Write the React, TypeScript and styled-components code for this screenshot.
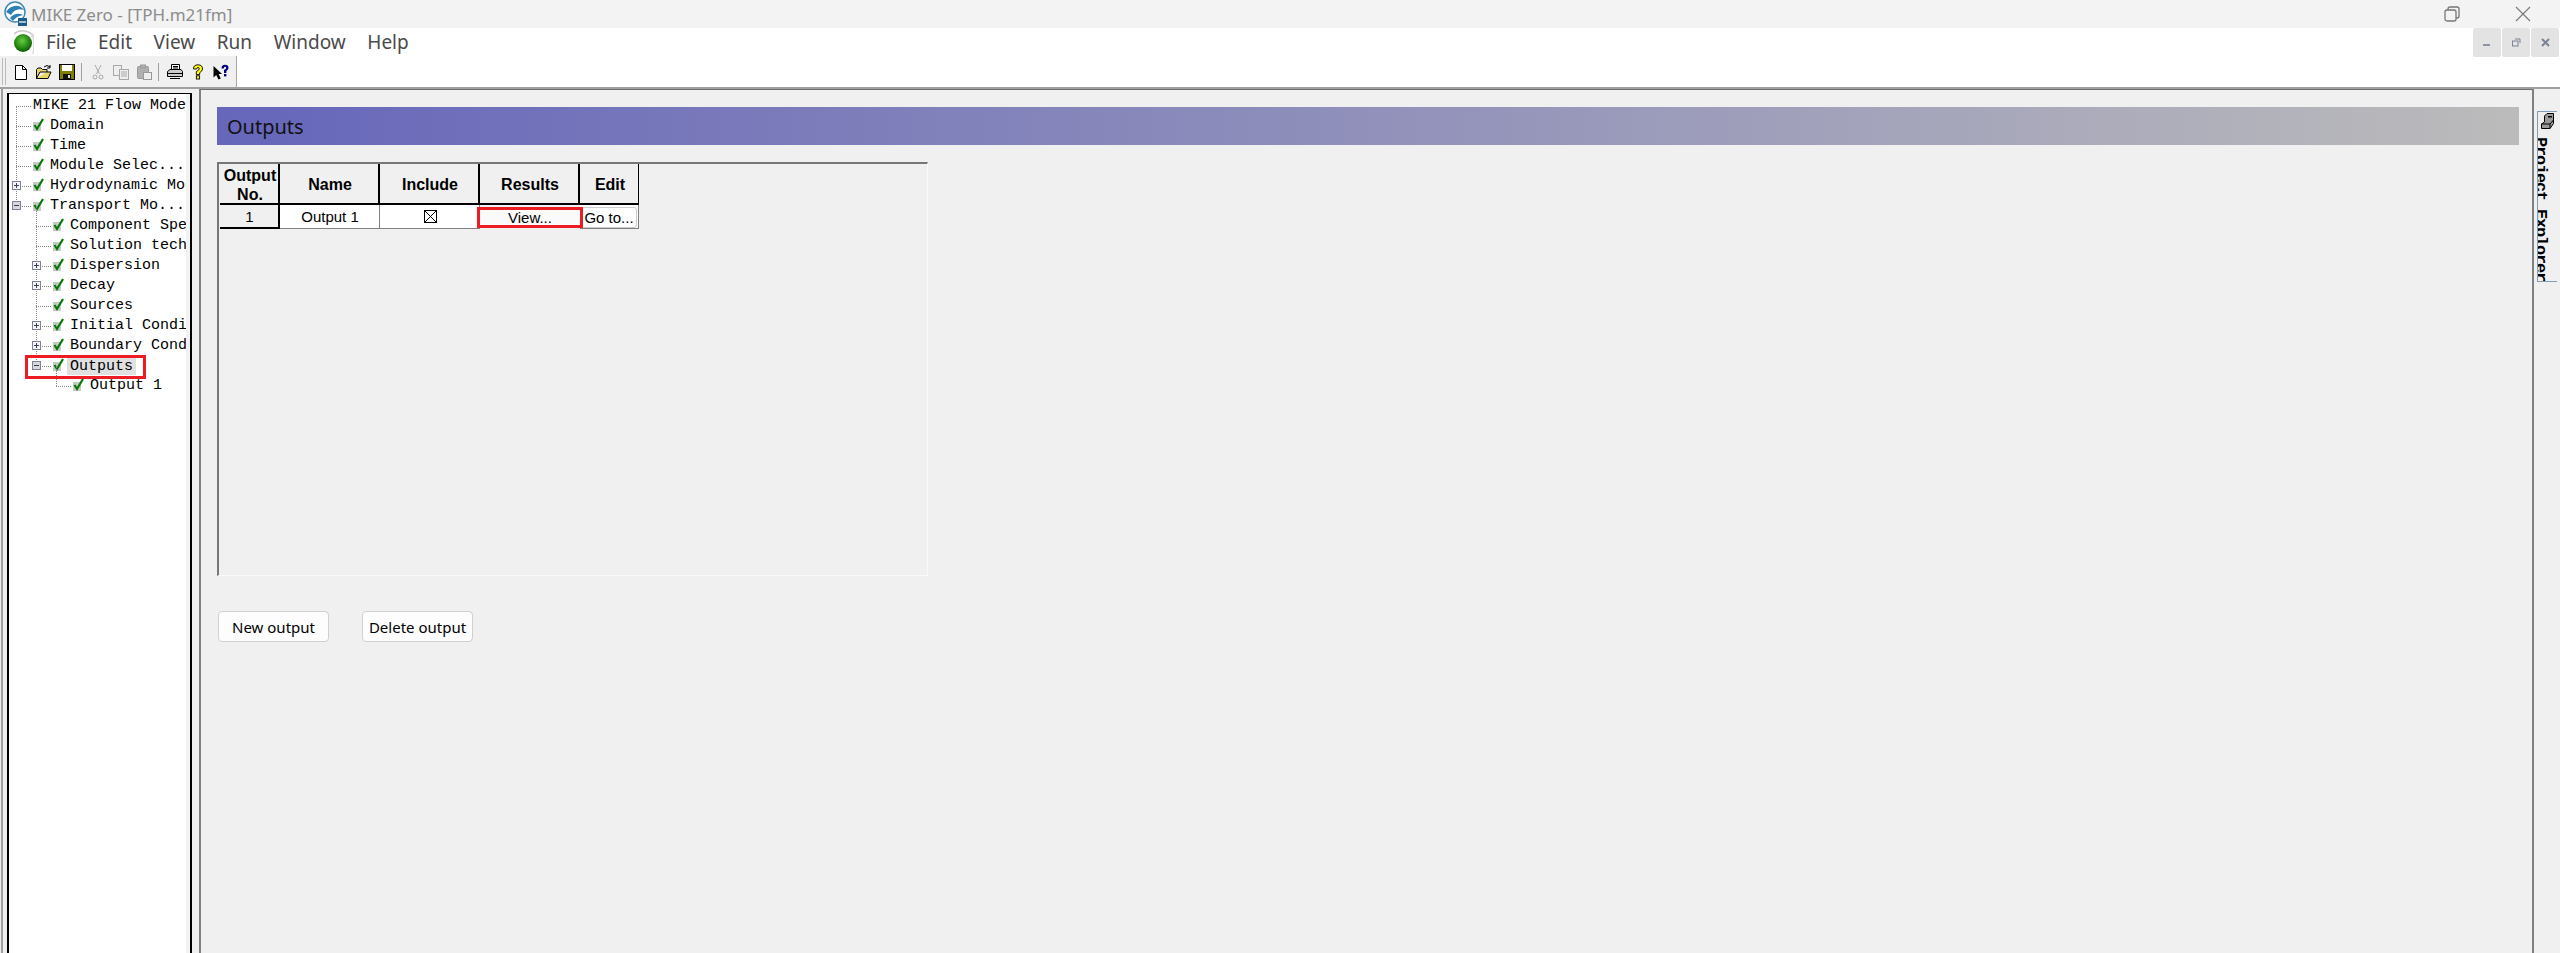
import React from "react";
import styled, { createGlobalStyle } from "styled-components";

const Global = createGlobalStyle`
  html, body { margin: 0; padding: 0; background: #f0f0f0; overflow: hidden; }
  #root { width: 2560px; height: 953px; }
`;
const Frame = styled.div`
  width: 2560px; height: 953px; display: flex; flex-direction: column; overflow: hidden;
  font-family: "Liberation Sans", Arial, sans-serif; color: #000;
`;
const TitleBar = styled.div`
  height: 28px; flex: none; background: #f3f3f3; display: flex; align-items: center; padding-left: 3px;
`;
const TitleText = styled.span`
  margin-left: 4px; font: 17px "Noto Sans", sans-serif; color: #8c8c8c; white-space: nowrap;
`;
const WinControls = styled.div`
  margin-left: auto; display: flex; align-items: center; gap: 55px; padding-right: 29px;
`;
const MenuBar = styled.div`
  height: 28px; flex: none; background: #fff; display: flex; align-items: center; position: relative;
`;
const MenuItems = styled.div`
  display: flex; margin-left: 12px; gap: 21.6px; font: 19px "Noto Sans", sans-serif; color: #4a4a4a;
`;
const MdiButtons = styled.div`
  margin-left: auto; display: flex; gap: 1px; padding-right: 1px; align-self: flex-start;
`;
const MdiButton = styled.div`
  width: 28px; height: 29px; background: #e3e3e3; border-radius: 2px; display: flex; align-items: center; justify-content: center;
`;
const ToolBar = styled.div`
  height: 31px; flex: none; background: #fff; display: flex;
`;
const ToolGroup = styled.div`
  width: 237px; background: #f0f0f0; display: flex; align-items: center; padding-left: 2px; box-sizing: border-box;
  border-right: 1px solid #a8a8a8;
`;
const Grip = styled.div`
  width: 5px; height: 27px; box-sizing: border-box; border-left: 1px solid #bbb; border-right: 1px solid #bbb; margin-right: 7px;
`;
const ToolIcon = styled.svg`
  width: 16px; height: 16px; flex: none; margin-right: 7px;
`;
const ToolSep = styled.div`
  width: 1px; height: 18px; background: #a0a0a0; margin: 0 8px 0 -1px;
`;
const Divider = styled.div`
  height: 2px; flex: none; background: #a0a0a0;
`;
const Body = styled.div`
  flex: 1; display: flex; min-height: 0; background: #f0f0f0;
`;
const TreeShell = styled.div`
  width: 191px; margin-left: 1px; flex: none; padding: 4px 0 0 4px; box-sizing: border-box; border-left: 2px solid #a0a0a0;
`;
const Tree = styled.div`
  width: 185px; height: 100%; background: #fff; border: 1px solid #000; border-left-width: 2px; border-right-width: 2px; border-bottom: 0; box-sizing: border-box; overflow: hidden; display: flex;
`;
const TreeInner = styled.div`
  flex: 1; min-width: 0; overflow: hidden; padding-top: 2px; margin-left: -1px; border-right: 4px solid #f2f2f2;
`;
const TreeRow = styled.div<{ $depth: number }>`
  height: 20px; display: flex; align-items: center; position: relative; padding-left: ${p => p.$depth * 20 + 25}px;
  font: 15px/20px "Liberation Mono", "DejaVu Sans Mono", monospace; white-space: nowrap; color: #000;
`;
const Exp = styled.div<{ $x: number; $open?: boolean }>`
  position: absolute; left: ${p => p.$x}px; top: 5px; width: 9px; height: 9px; box-sizing: border-box; border: 1px solid #7d8296;
  background: ${p => p.$open ? "#d8d8dc" : "#f4f4f8"}; z-index: 1; display: flex; align-items: center; justify-content: center;
`;
const Dots = styled.div<{ $x: number }>`
  position: absolute; left: ${p => p.$x}px; top: 10px; width: 15px; border-top: 1px dotted #888;
`;
const VDots = styled.div<{ $x: number }>`
  position: absolute; left: ${p => p.$x}px; top: -10px; height: 20px; border-left: 1px dotted #888;
`;
const Check = styled.svg`
  width: 11px; height: 14px; flex: none; margin-right: 6px; position: relative; margin-top: -2px;
`;
const Label = styled.span<{ $sel?: boolean }>`
  ${p => p.$sel ? "background: #e0e0e0; line-height: 17px; padding: 0 3px; margin-left: -3px;" : ""}
`;
const Hilite = styled.div`
  position: absolute; left: 17px; top: -1px; width: 121px; height: 24px; border: 3px solid #ed1c24; box-sizing: border-box; pointer-events: none; z-index: 2;
`;
const Split = styled.div`
  width: 7px; flex: none; background: #f0f0f0;
`;
const Main = styled.div`
  flex: 1; border-left: 2px solid #808080; border-top: 1px solid #6e6e6e; padding: 17px 0 0 16px; box-sizing: border-box; min-width: 0;
`;
const Header = styled.div`
  width: 2302px; height: 38px; background: linear-gradient(90deg, #6666bb, #bbbbbb); display: flex; align-items: center; padding-left: 10px; box-sizing: border-box;
  font: 20px "Noto Sans", sans-serif; color: #111;
`;
const GridBox = styled.div`
  margin-top: 17px; width: 711px; height: 414px; box-sizing: border-box; border-top: 2px solid #777; border-left: 2px solid #777; border-right: 1px solid #fafafa; border-bottom: 1px solid #fafafa; padding-left: 1px;
`;
const GridTable = styled.div`
  display: grid; grid-template-columns: 60px 100px 100px 100px 59px; grid-template-rows: 41px 24px; width: 419px;
`;
const HeadCell = styled.div`
  display: flex; align-items: center; justify-content: center; text-align: center; background: #f0f0f0; border-right: 2px solid #000; border-bottom: 2px solid #000;
  box-sizing: border-box; font: bold 16px/19px "Liberation Sans", sans-serif; padding: 2px 0 0 2px;
`;
const EndHead = styled(HeadCell)`
  border-right-width: 1px;
`;
const DataCell = styled.div<{ $num?: boolean }>`
  display: flex; align-items: center; justify-content: center; box-sizing: border-box; background: ${p => p.$num ? "#f0f0f0" : "#fff"};
  border-right: ${p => p.$num ? "2px solid #000" : "1px solid #808080"}; border-bottom: ${p => p.$num ? "2px solid #000" : "1px solid #808080"}; font: 15px "Liberation Sans", sans-serif; padding-left: 1px;
`;
const ViewCell = styled.div`
  position: relative; z-index: 1; display: flex; align-items: center; justify-content: center; background: #fafafa; font: 15px "Liberation Sans", sans-serif; box-sizing: border-box; border: 3px solid #ed1c24; margin: 2px -3px 1px -3px; height: 21px;
`;
const GoButton = styled.div`
  flex: 1; display: flex; align-items: center; justify-content: center; background: #fff; border: 1px solid #ccc; border-radius: 3px; box-sizing: border-box; margin: 1px 1px 0 0; height: 21px; white-space: nowrap;
`;
const Actions = styled.div`
  margin-top: 35px; display: flex; gap: 33px; margin-left: 1px;
`;
const Btn = styled.div`
  width: 111px; height: 31px; box-sizing: border-box; background: #fdfdfd; border: 1px solid #d0d0d0; border-radius: 4px; display: flex; align-items: center; justify-content: center; font: 15px "Noto Sans", sans-serif; color: #000; white-space: nowrap;
`;
const SideRail = styled.div`
  width: 28px; flex: none; background: #f0f0f0; border-left: 2px solid #808080; box-sizing: border-box; padding: 22px 0 0 3px;
`;
const SideTab = styled.div`
  width: 20px; height: 171px; border: 1px solid #7f9db9; border-right: 0; box-sizing: border-box; overflow: hidden; padding-top: 1px;
`;
const SideIcon = styled.svg`
  display: block; width: 13px; height: 16px; margin-left: 3px;
`;
const SideText = styled.div`
  writing-mode: vertical-rl; font: bold 17px/17px "Liberation Mono", monospace; letter-spacing: -1.2px; margin: 8px 0 0 -6px; white-space: nowrap; color: #000;
`;

const Tick = () => (
  <Check viewBox="0 0 11 14">
    <rect x="0" y="4" width="8" height="9" fill="#c8c8c8" />
    <path d="M1.5 7 L4 11 L10 1" fill="none" stroke="#007a00" strokeWidth="2.2" />
  </Check>
);

type Row = { d: number; t: string; tick: boolean; exp?: "+" | "-"; sel?: boolean; vline?: boolean };
const rows: Row[] = [
  { d: 0, t: "MIKE 21 Flow Model", tick: false },
  { d: 0, t: "Domain", tick: true, vline: true },
  { d: 0, t: "Time", tick: true, vline: true },
  { d: 0, t: "Module Selec...", tick: true, vline: true },
  { d: 0, t: "Hydrodynamic Module", tick: true, exp: "+", vline: true },
  { d: 0, t: "Transport Mo...", tick: true, exp: "-", vline: true },
  { d: 1, t: "Component Specification", tick: true, vline: true },
  { d: 1, t: "Solution technique", tick: true, vline: true },
  { d: 1, t: "Dispersion", tick: true, exp: "+", vline: true },
  { d: 1, t: "Decay", tick: true, exp: "+", vline: true },
  { d: 1, t: "Sources", tick: true, vline: true },
  { d: 1, t: "Initial Conditions", tick: true, exp: "+", vline: true },
  { d: 1, t: "Boundary Conditions", tick: true, exp: "+", vline: true },
  { d: 1, t: "Outputs", tick: true, exp: "-", sel: true, vline: true },
  { d: 2, t: "Output 1", tick: true, vline: true },
];

export default function App() {
  return (
    <Frame>
      <Global />
      <TitleBar>
        <svg width="24" height="26" viewBox="0 0 24 26">
          <circle cx="12" cy="11" r="10" fill="#fff" stroke="#3f87b8" strokeWidth="1.5" />
          <path d="M3 11 C8 3 17 3 21 9 C15 7 11 9 8 14 Z" fill="#2f7fb5" />
          <path d="M7 17 C11 12 16 12 20 14 C15 15 12 17 10 20 Z" fill="#2f7fb5" />
          <rect x="15" y="17" width="9" height="8" fill="#1d5c8c" />
          <path d="M16 21 H23" stroke="#cfe3f0" strokeWidth="1.5" />
        </svg>
        <TitleText>MIKE Zero - [TPH.m21fm]</TitleText>
        <WinControls>
          <svg width="16" height="16" viewBox="0 0 16 16" fill="none" stroke="#777" strokeWidth="1.3">
            <rect x="1" y="4" width="11" height="11" rx="2" />
            <path d="M4 4 V3 a2 2 0 0 1 2 -2 h7 a2 2 0 0 1 2 2 v7 a2 2 0 0 1 -2 2 h-1" />
          </svg>
          <svg width="16" height="16" viewBox="0 0 16 16" stroke="#777" strokeWidth="1.1"><path d="M1 1 L15 15 M15 1 L1 15" /></svg>
        </WinControls>
      </TitleBar>
      <MenuBar>
        <svg width="24" height="26" viewBox="0 0 24 26" style={{ marginLeft: 10 }}>
          <defs>
            <radialGradient id="orb" cx="45%" cy="38%" r="65%">
              <stop offset="0%" stopColor="#63cf40" />
              <stop offset="70%" stopColor="#1f7d10" />
              <stop offset="100%" stopColor="#0f5a08" />
            </radialGradient>
          </defs>
          <path d="M4 5 C10 0 20 1 24 8" fill="none" stroke="#c9c9c9" strokeWidth="1.5" />
          <path d="M22 6 C25 12 24 20 23 25" fill="none" stroke="#dcdcdc" strokeWidth="1.5" />
          <circle cx="13" cy="14" r="9" fill="url(#orb)" />
        </svg>
        <MenuItems>
          <span>File</span><span>Edit</span><span>View</span><span>Run</span><span>Window</span><span>Help</span>
        </MenuItems>
        <MdiButtons>
          <MdiButton><svg width="8" height="8" viewBox="0 0 8 8"><rect x="0" y="5" width="7" height="2" fill="#8a94a4" /></svg></MdiButton>
          <MdiButton><svg width="9" height="9" viewBox="0 0 9 9" fill="none" stroke="#7a8494"><rect x="0.5" y="3" width="5.5" height="5" /><path d="M3 1 H8 V5" /></svg></MdiButton>
          <MdiButton><svg width="9" height="9" viewBox="0 0 9 9" stroke="#7a8494" strokeWidth="2"><path d="M1 1 L8 8 M8 1 L1 8" /></svg></MdiButton>
        </MdiButtons>
      </MenuBar>
      <ToolBar>
        <ToolGroup>
          <Grip />
          <ToolIcon viewBox="0 0 16 16"><path d="M2.5 1.5 H9.5 L13.5 5.5 V15.5 H2.5 Z M9.5 1.5 V5.5 H13.5" fill="#fff" stroke="#000" /></ToolIcon>
          <ToolIcon viewBox="0 0 16 16"><path d="M0.5 14.5 V5.5 L2 4 H5 L6.5 5.5 H11 V8 M0.5 14.5 H12 L15 8 H4 L0.5 14.5" fill="#e8d860" stroke="#000" /><path d="M8 3 Q11 0 14 3 M14 1 V4 H11" fill="none" stroke="#000" /></ToolIcon>
          <ToolIcon viewBox="0 0 16 16"><rect x="0.5" y="0.5" width="15" height="15" fill="#808000" stroke="#000" /><rect x="3" y="1" width="10" height="6" fill="#fff" /><rect x="4" y="10" width="8" height="5" fill="#111" /><rect x="9" y="11" width="2" height="3" fill="#ddd" /></ToolIcon>
          <ToolSep />
          <ToolIcon viewBox="0 0 16 16" fill="none" stroke="#a8a8a8"><path d="M5 1 L9.5 10 M11 1 L6.5 10" /><circle cx="5" cy="13" r="2" /><circle cx="11" cy="13" r="2" /></ToolIcon>
          <ToolIcon viewBox="0 0 16 16" fill="#eee" stroke="#a8a8a8"><rect x="0.5" y="1.5" width="8" height="10" /><rect x="6.5" y="5.5" width="9" height="10" /><path d="M8 8 H14 M8 10 H14 M8 12 H14" /></ToolIcon>
          <ToolIcon viewBox="0 0 16 16" fill="#b0b0b0" stroke="#999"><rect x="1.5" y="2.5" width="11" height="12" rx="1" /><rect x="4.5" y="1" width="5" height="3" /><rect x="7.5" y="8.5" width="8" height="7" fill="#eee" /></ToolIcon>
          <ToolSep />
          <ToolIcon viewBox="0 0 16 16"><path d="M4.5 0.5 H12.5 V6 H4.5 Z" fill="#fff" stroke="#000" /><path d="M0.5 7.5 L3 5.5 H14 L15.5 7.5 V12.5 H0.5 Z" fill="#ccc" stroke="#000" /><path d="M1 9.5 H15 M3 14.5 H13" stroke="#000" /><path d="M6 2.5 H11 M6 4 H11" stroke="#000" /></ToolIcon>
          <ToolIcon viewBox="0 0 16 16"><path d="M3.5 5 Q3.5 0.8 8 0.8 Q12.5 0.8 12.5 5 Q12.5 7 9.7 8.7 V10.5 H6.3 V7.6 Q9.3 6 9.3 4.8 Q9.3 3.5 8 3.5 Q6.7 3.5 6.7 5 Z" fill="#ff0" stroke="#000" strokeWidth="0.9" /><rect x="6.4" y="11.8" width="3.2" height="3.2" fill="#ff0" stroke="#000" strokeWidth="0.9" /></ToolIcon>
          <ToolIcon viewBox="0 0 16 16"><path d="M0.5 2 L0.5 13.5 L3.2 11 L5.5 15.5 L7.8 14.4 L5.6 10 L9 10 Z" fill="#000" /><path d="M8.5 4.5 Q8.5 0.8 12 0.8 Q15.5 0.8 15.5 4 Q15.5 5.6 13.4 7 V9 H11 V6 Q13.2 4.9 13.2 3.9 Q13.2 2.8 12 2.8 Q10.8 2.8 10.8 4.5 Z" fill="#000080" /><rect x="11" y="10" width="2.4" height="2.4" fill="#000080" /></ToolIcon>
        </ToolGroup>
      </ToolBar>
      <Divider />
      <Body>
        <TreeShell>
          <Tree>
            <TreeInner>
              {rows.map((r, i) => {
                const c = 8 + r.d * 20;
                return (
                  <TreeRow key={i} $depth={r.d}>
                    {r.vline && <VDots $x={c} />}
                    <Dots $x={c} />
                    {r.exp && (
                      <Exp $x={c - 4} $open={r.exp === "-"}>
                        <svg width="7" height="7" viewBox="0 0 7 7" stroke="#3a3f5a">
                          <path d={r.exp === "+" ? "M1 3.5 H6 M3.5 1 V6" : "M1 3.5 H6"} />
                        </svg>
                      </Exp>
                    )}
                    {r.tick ? <Tick /> : null}
                    <Label $sel={r.sel}>{r.t}</Label>
                    {r.sel && <Hilite />}
                  </TreeRow>
                );
              })}
            </TreeInner>
          </Tree>
        </TreeShell>
        <Split />
        <Main>
          <Header>Outputs</Header>
          <GridBox>
            <GridTable>
              <HeadCell>Output<br />No.</HeadCell>
              <HeadCell>Name</HeadCell>
              <HeadCell>Include</HeadCell>
              <HeadCell>Results</HeadCell>
              <EndHead>Edit</EndHead>
              <DataCell $num>1</DataCell>
              <DataCell>Output 1</DataCell>
              <DataCell>
                <svg width="13" height="13" viewBox="0 0 13 13" fill="none" stroke="#000"><rect x="0.5" y="0.5" width="12" height="12" /><path d="M1 1 L12 12 M12 1 L1 12" /></svg>
              </DataCell>
              <ViewCell>View...</ViewCell>
              <DataCell><GoButton>Go to...</GoButton></DataCell>
            </GridTable>
          </GridBox>
          <Actions>
            <Btn>New output</Btn>
            <Btn>Delete output</Btn>
          </Actions>
        </Main>
        <SideRail>
          <SideTab>
            <SideIcon viewBox="0 0 13 16">
              <path d="M3.5 3 L6 0.5 H12.5 V10.5 L9 15.5 H0.5 V11 L3.5 9 Z" fill="#999" stroke="#000" />
              <rect x="7" y="3" width="4" height="1.5" fill="#000" />
              <path d="M0.5 11 H9 V15.5 M9 11 L12.5 7" fill="none" stroke="#000" />
            </SideIcon>
            <SideText>Project Explorer</SideText>
          </SideTab>
        </SideRail>
      </Body>
    </Frame>
  );
}
